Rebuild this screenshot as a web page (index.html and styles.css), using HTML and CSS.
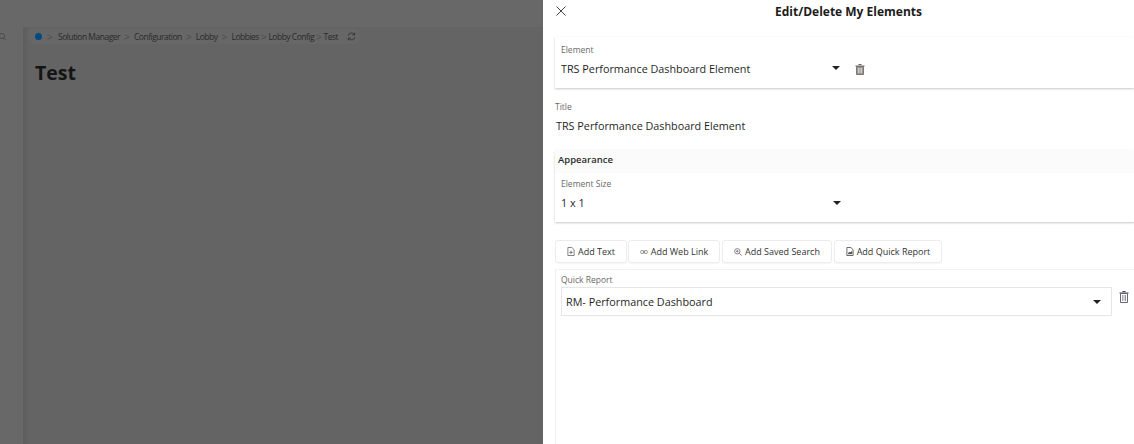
FILE: index.html
```html
<!DOCTYPE html>
<html lang="en">
<head>
<meta charset="utf-8">
<title>Edit/Delete My Elements</title>
<link rel="stylesheet" href="styles.css">
</head>
<body>
<div class="page">
  <section class="backdrop">
    <div class="topbar"></div>
    <div class="under">
      <aside class="rail">
        <svg class="rail-search" width="8" height="8" viewBox="0 0 8 8"><circle cx="3" cy="3" r="2.6" fill="none" stroke="#4c4c4c"/><path d="M5 5l2 2" stroke="#4c4c4c"/></svg>
      </aside>
      <main class="content">
        <nav class="crumbs">
          <span class="dot"></span>
          <span class="sep sep-first">&gt;</span><span>Solution Manager</span>
          <span class="sep">&gt;</span><span>Configuration</span>
          <span class="sep">&gt;</span><span>Lobby</span>
          <span class="sep">&gt;</span><span>Lobbies</span>
          <span class="sep tight">&gt;</span><span>Lobby Config</span>
          <span class="sep tight">&gt;</span><span>Test</span>
          <svg class="refresh" width="9" height="9" viewBox="0 0 10 10" fill="none" stroke="#333" stroke-width="1"><path d="M1.2 4.2A3.8 3.8 0 0 1 8 2.8M8.8 5.8A3.8 3.8 0 0 1 2 7.2"/><path d="M8.4 .8v2.4H6M1.6 9.2V6.8H4"/></svg>
        </nav>
        <h1 class="page-title">Test</h1>
      </main>
    </div>
  </section>
  <section class="panel">
    <header class="panel-head">
      <svg class="close" width="10" height="10" viewBox="0 0 10 10"><path d="M.5.5l9 9M9.5.5l-9 9" stroke="#444" stroke-width="1" fill="none"/></svg>
      <h2 class="panel-title">Edit/Delete My Elements</h2>
    </header>
    <div class="panel-body">
      <div class="card element-card">
        <label class="field-label">Element</label>
        <div class="select-row">
          <span class="value">TRS Performance Dashboard Element</span>
          <span class="caret"></span>
          <svg class="trash" width="10" height="11" viewBox="0 0 10 11"><path d="M3.5.5h3M.5 2h9" stroke="#666" fill="none"/><path d="M1.5 2.5h7V10.5h-7z" fill="#9a958f" stroke="#666" stroke-width=".8"/><path d="M3.5 4v5M5 4v5M6.5 4v5" stroke="#e8e4df" stroke-width=".7"/></svg>
        </div>
      </div>
      <div class="title-field">
        <label class="field-label">Title</label>
        <div class="value">TRS Performance Dashboard Element</div>
      </div>
      <div class="card appearance">
        <div class="section-head"><span>Appearance</span></div>
        <div class="section-body">
          <label class="field-label">Element Size</label>
          <div class="select-row">
            <span class="value">1 x 1</span>
            <span class="caret"></span>
          </div>
        </div>
      </div>
      <div class="actions">
        <button class="btn btn-text" type="button">
          <svg width="8" height="9" viewBox="0 0 9 10" fill="none" stroke="#666" stroke-width=".9"><path d="M1 .5h4.5L8 3v6.5H1zM4.5 4v4M2.5 6h4"/></svg>Add Text</button>
        <button class="btn btn-link" type="button">
          <svg width="8" height="4" viewBox="0 0 9 5" fill="none" stroke="#777" stroke-width="1"><rect x=".5" y=".5" width="3.4" height="4" rx="1"/><rect x="5.1" y=".5" width="3.4" height="4" rx="1"/><path d="M3 2.5h3"/></svg>Add Web Link</button>
        <button class="btn btn-search" type="button">
          <svg width="8" height="8" viewBox="0 0 9 9" fill="none" stroke="#666" stroke-width=".9"><circle cx="3.7" cy="3.7" r="3"/><path d="M6 6l2.6 2.6M2.3 3.7h2.8M3.7 2.3v2.8"/></svg>Add Saved Search</button>
        <button class="btn btn-report" type="button">
          <svg width="8" height="9" viewBox="0 0 9 10" fill="none" stroke="#444" stroke-width=".9"><path d="M1 .5h4.5L8 3v6.5H1z"/><path d="M2.5 7.5l1.5-2 1 1 1.5-1.5v2.5z" fill="#444"/></svg>Add Quick Report</button>
      </div>
      <div class="report-card">
        <label class="field-label">Quick Report</label>
        <div class="report-row">
          <div class="report-select">
            <span class="value">RM- Performance Dashboard</span>
            <span class="caret"></span>
          </div>
          <svg class="trash trash-report" width="10" height="12" viewBox="0 0 10 12"><path d="M3.5.5h3M.5 2h9" stroke="#445" fill="none"/><path d="M1.5 2.5h7V11.5h-7z" fill="#fff" stroke="#556" stroke-width=".9"/><path d="M3.5 4v6" stroke="#c99a86" stroke-width=".9"/><path d="M5 4v6" stroke="#8ba0bf" stroke-width=".9"/><path d="M6.5 4v6" stroke="#8a8a8a" stroke-width=".9"/></svg>
        </div>
      </div>
    </div>
  </section>
</div>
</body>
</html>
```
FILE: styles.css
```css
* { box-sizing: border-box; }
html, body { margin: 0; height: 100%; overflow: hidden; }
body { font-family: "Open Sans", "Liberation Sans", sans-serif; color: #1f1f1f; background: #fff; }
.page { display: flex; width: 1134px; height: 444px; }

.backdrop { width: 543px; flex: none; display: flex; flex-direction: column; background: #646464; }
.topbar { height: 27px; flex: none; background: #686868; }
.under { flex: 1; display: flex; }
.rail { width: 23px; flex: none; background: #686868; padding-top: 6px; }
.rail-search { display: block; margin-left: -1px; }
.content { flex: 1; padding: 2px 0 0 5px; box-shadow: inset 7px 0 5px -4px rgba(0, 0, 0, .07); }
.crumbs { display: flex; width: fit-content; align-items: center; height: 15px; padding: 0 5px 0 7px; border-radius: 8px; background: #676767; font-size: 8.5px; letter-spacing: -.5px; color: #2a2a2a; white-space: nowrap; }
.dot { width: 7px; height: 7px; border-radius: 50%; background: #034a80; }
.sep { width: 14px; text-align: center; color: #3a3a3a; font-size: 10.5px; font-weight: 300; letter-spacing: 0; }
.sep-first { width: 16px; }
.sep.tight { width: 9.5px; }
.refresh { margin-left: 9px; }
.page-title { margin: 16px 0 0 7px; font-size: 19.5px; line-height: 26px; font-weight: 700; color: #141414; }

.panel { flex: 1; min-width: 0; display: flex; flex-direction: column; background: #fff; }
.panel-head { position: relative; height: 37px; flex: none; display: flex; justify-content: center; padding-top: 3px; }
.close { position: absolute; left: 13px; top: 6px; }
.panel-title { margin: 0 0 0 20px; font-size: 12px; line-height: 18px; font-weight: 700; color: #1c1c1c; }
.panel-body { flex: 1; padding-left: 12px; display: flex; flex-direction: column; }

.card { box-shadow: 0 1px 2px rgba(0, 0, 0, .22); }
.field-label { display: block; font-size: 8.5px; line-height: 12px; color: #6a6a6a; }
.value { font-size: 10.8px; line-height: 16px; color: #1f1f1f; }
.select-row { display: flex; align-items: center; height: 16px; }
.caret { width: 0; height: 0; border-left: 4px solid transparent; border-right: 4px solid transparent; border-top: 4px solid #222; }

.element-card { height: 51px; padding: 7px 0 0 6px; }
.element-card .select-row { margin-top: 5px; }
.element-card .caret { margin-left: 82px; margin-top: -2px; }
.element-card .trash { margin-left: 15px; }
.title-field { height: 62px; padding: 13px 0 0 1px; }
.title-field .field-label { margin-left: -1px; }
.title-field .value { margin-top: 5px; }

.appearance { height: 72px; }
.section-head { height: 23px; padding: 0 0 0 3px; font-size: 9.5px; line-height: 20px; font-weight: 600; color: #2c2c2c; background: #fbfbfb; }
.section-body { padding: 5px 0 0 6px; }
.section-body .select-row { margin-top: 5px; }
.section-body .caret { margin-left: 248px; }

.actions { display: flex; margin-top: 18px; height: 23px; }
.btn { display: flex; align-items: center; justify-content: center; gap: 3px; height: 23px; padding: 0; border: 1px solid #ececec; border-radius: 3px; background: #fff; font-family: inherit; font-size: 9px; color: #333; box-shadow: 0 1px 1px rgba(0, 0, 0, .04); }
.btn-text { width: 72px; }
.btn-link { width: 92px; margin-left: 1px; }
.btn-search { width: 110px; margin-left: 2px; }
.btn-report { width: 108px; margin-left: 2px; }

.report-card { flex: 1; margin-top: 6px; padding: 4px 0 0 5px; border-top: 1px solid #f3f3f3; border-left: 1px solid #eee; }
.report-row { display: flex; align-items: flex-start; margin-top: 1px; }
.report-select { width: 551px; height: 29px; padding: 0 10px 0 4px; display: flex; align-items: center; justify-content: space-between; border: 1px solid #e6e6e6; }
.trash-report { margin: 4px 0 0 7px; }
```
